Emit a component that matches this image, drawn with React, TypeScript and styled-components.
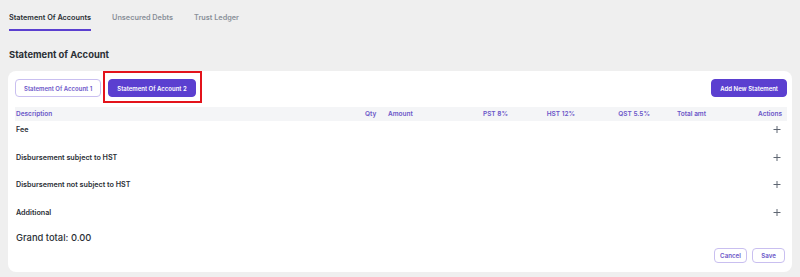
import React from "react";
import styled, { createGlobalStyle } from "styled-components";

const Global = createGlobalStyle`
  html, body { margin: 0; padding: 0; background: #efefef; }
  body { font-family: Inter, "Noto Sans", sans-serif; color: #2b2f36; }
  * { box-sizing: border-box; }
`;

const Page = styled.div`
  width: 800px;
  height: 277px;
  padding: 0 8px;
  display: flex;
  flex-direction: column;
  overflow: hidden;
`;

const Tabs = styled.nav`
  display: flex;
  gap: 21px;
  padding: 0 1px;
  height: 31px;
  align-items: stretch;
`;

const Tab = styled.div<{ $active?: boolean }>`
  display: flex;
  align-items: center;
  padding-top: 5px;
  font-size: 7.3px;
  font-weight: 600;
  color: ${(p) => (p.$active ? "#2b2f36" : "#8a8f99")};
  border-bottom: 2px solid ${(p) => (p.$active ? "#5b3fd0" : "transparent")};
`;

const Heading = styled.h2`
  margin: 17px 0 0 1px;
  font-size: 9.4px;
  font-weight: 700;
  color: #2b2f36;
  line-height: 14px;
`;

const Card = styled.section`
  margin-top: 9px;
  background: #fff;
  border-radius: 8px;
  padding: 8px 5px 9px 7px;
  display: flex;
  flex-direction: column;
  height: 201px;
`;

const Toolbar = styled.div`
  display: flex;
  align-items: center;
  gap: 7px;
  height: 18px;
`;

const Highlight = styled.div`
  position: relative;
  display: flex;
  &::after {
    content: "";
    position: absolute;
    left: -5px;
    right: -6px;
    top: -8px;
    bottom: -6px;
    border: 2.5px solid #e3131b;
    pointer-events: none;
  }
`;

const Button = styled.button<{ $variant?: "solid" | "outline" }>`
  height: 18px;
  padding: 0 8px;
  border-radius: 4px;
  font-family: inherit;
  font-size: 6px;
  font-weight: 600;
  cursor: pointer;
  white-space: nowrap;
  border: 1px solid ${(p) => (p.$variant === "solid" ? "#5b3fd0" : "#c9bff0")};
  background: ${(p) => (p.$variant === "solid" ? "#5b3fd0" : "#fff")};
  color: ${(p) => (p.$variant === "solid" ? "#fff" : "#6a55c8")};
`;

const Spacer = styled.div`
  flex: 1;
`;

const Table = styled.div`
  margin-top: 10px;
  display: flex;
  flex-direction: column;
`;

const cols = "349px 23px 70px 50px 67px 75px 27px 1fr";

const HeaderRow = styled.div`
  display: grid;
  grid-template-columns: ${cols};
  height: 14px;
  align-items: center;
  background: #f4f5f7;
  padding: 0 5px 0 1px;
  font-size: 6.5px;
  font-weight: 600;
  color: #6a55c8;
`;

const HCell = styled.div<{ $align?: "left" | "right" }>`
  text-align: ${(p) => p.$align || "left"};
  white-space: nowrap;
`;

const SplitCell = styled(HCell)`
  display: flex;
  justify-content: space-between;
`;

const Row = styled.div`
  display: flex;
  align-items: flex-start;
  justify-content: space-between;
  height: 27.5px;
  padding: 4px 6px 0 1px;
  line-height: 9px;
  font-size: 7.2px;
  font-weight: 600;
  color: #2b2f36;
`;

const PlusIcon = () => (
  <svg width="8" height="9" viewBox="0 0 8 9">
    <path d="M4 1v7M0.5 4.5h7" stroke="#5f6672" strokeWidth="1" />
  </svg>
);

const GrandTotal = styled.div`
  margin-top: 1px;
  padding-left: 1px;
  font-size: 9.4px;
  font-weight: 500;
  color: #2b2f36;
`;

const Footer = styled.div`
  display: flex;
  justify-content: flex-end;
  gap: 5px;
  margin-top: 5px;
  padding-right: 2px;
`;

const SmallButton = styled(Button)`
  height: 15px;
  padding: 0 5px;
  min-width: 33px;
  font-size: 6.2px;
`;

const rows = [
  "Fee",
  "Disbursement subject to HST",
  "Disbursement not subject to HST",
  "Additional",
];

export default function App() {
  return (
    <>
      <Global />
      <Page>
        <Tabs>
          <Tab $active>Statement Of Accounts</Tab>
          <Tab>Unsecured Debts</Tab>
          <Tab>Trust Ledger</Tab>
        </Tabs>
        <Heading>Statement of Account</Heading>
        <Card>
          <Toolbar>
            <Button $variant="outline">Statement Of Account 1</Button>
            <Highlight>
              <Button $variant="solid">Statement Of Account 2</Button>
            </Highlight>
            <Spacer />
            <Button $variant="solid">Add New Statement</Button>
          </Toolbar>
          <Table>
            <HeaderRow>
              <HCell>Description</HCell>
              <HCell>Qty</HCell>
              <HCell>Amount</HCell>
              <HCell $align="right">PST 8%</HCell>
              <HCell $align="right">HST 12%</HCell>
              <HCell $align="right">QST 5.5%</HCell>
              <HCell />
              <SplitCell>
                <span>Total amt</span>
                <span>Actions</span>
              </SplitCell>
            </HeaderRow>
            {rows.map((r) => (
              <Row key={r}>
                <span>{r}</span>
                <PlusIcon />
              </Row>
            ))}
          </Table>
          <GrandTotal>Grand total: 0.00</GrandTotal>
          <Footer>
            <SmallButton $variant="outline">Cancel</SmallButton>
            <SmallButton $variant="outline">Save</SmallButton>
          </Footer>
        </Card>
      </Page>
    </>
  );
}
